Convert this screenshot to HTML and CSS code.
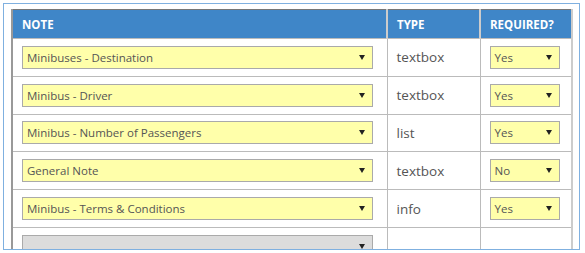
FILE: index.html
```html
<!DOCTYPE html>
<html lang="en">
<head>
    <meta charset="UTF-8">
    <title>Notes</title>
    <link rel="stylesheet" href="styles.css">
</head>
<body>
    <div class="frame">
        <table class="notes">
            <thead>
                <tr>
                    <th class="col-note">Note</th>
                    <th class="col-type">Type</th>
                    <th class="col-req">Required?</th>
                </tr>
            </thead>
            <tbody>
                <tr>
                    <td><div class="pick wide"><span>Minibuses - Destination</span><svg width="6" height="5" viewBox="0 0 6 5"><path d="M0 0h6L3 5z"/></svg></div></td>
                    <td class="type">textbox</td>
                    <td><div class="pick small"><span>Yes</span><svg width="6" height="5" viewBox="0 0 6 5"><path d="M0 0h6L3 5z"/></svg></div></td>
                </tr>
                <tr>
                    <td><div class="pick wide"><span>Minibus - Driver</span><svg width="6" height="5" viewBox="0 0 6 5"><path d="M0 0h6L3 5z"/></svg></div></td>
                    <td class="type">textbox</td>
                    <td><div class="pick small"><span>Yes</span><svg width="6" height="5" viewBox="0 0 6 5"><path d="M0 0h6L3 5z"/></svg></div></td>
                </tr>
                <tr>
                    <td><div class="pick wide"><span>Minibus - Number of Passengers</span><svg width="6" height="5" viewBox="0 0 6 5"><path d="M0 0h6L3 5z"/></svg></div></td>
                    <td class="type">list</td>
                    <td><div class="pick small"><span>Yes</span><svg width="6" height="5" viewBox="0 0 6 5"><path d="M0 0h6L3 5z"/></svg></div></td>
                </tr>
                <tr>
                    <td><div class="pick wide"><span>General Note</span><svg width="6" height="5" viewBox="0 0 6 5"><path d="M0 0h6L3 5z"/></svg></div></td>
                    <td class="type">textbox</td>
                    <td><div class="pick small"><span>No</span><svg width="6" height="5" viewBox="0 0 6 5"><path d="M0 0h6L3 5z"/></svg></div></td>
                </tr>
                <tr>
                    <td><div class="pick wide"><span>Minibus - Terms &amp; Conditions</span><svg width="6" height="5" viewBox="0 0 6 5"><path d="M0 0h6L3 5z"/></svg></div></td>
                    <td class="type">info</td>
                    <td><div class="pick small"><span>Yes</span><svg width="6" height="5" viewBox="0 0 6 5"><path d="M0 0h6L3 5z"/></svg></div></td>
                </tr>
                <tr>
                    <td><div class="pick wide empty"><span></span><svg width="6" height="5" viewBox="0 0 6 5"><path d="M0 0h6L3 5z"/></svg></div></td>
                    <td class="type"></td>
                    <td></td>
                </tr>
            </tbody>
        </table>
    </div>
</body>
</html>
```

FILE: styles.css
```css
body {
    margin: 0;
    background: #fff;
    font-family: "Open Sans", Arial, sans-serif;
    color: #555;
}

.frame {
    margin: 3px 0 0 3px;
    width: 577px;
    height: 247px;
    border: 1px solid #7fb0e0;
    padding: 5px 0 0 7px;
    box-sizing: border-box;
    overflow: hidden;
}

.notes {
    border-collapse: collapse;
    width: 562px;
    table-layout: fixed;
}

.notes th {
    background-color: #3f86c8;
    color: #fff;
    font-size: 11.5px;
    font-weight: bold;
    text-transform: uppercase;
    text-align: left;
    height: 28px;
    padding: 0 0 0 9px;
    border-top: 1px solid #777;
    border-left: 2px solid #999;
    border-right: 2px solid #ccc;
}

.notes th.col-type,
.notes th.col-req {
    border-left: 1px solid #ccc;
}

.col-note { width: 364px; }
.col-type { width: 82px; }
.col-req { width: 81px; }

.notes td {
    height: 36.8px;
    padding: 0 0 0 9px;
    border: 1px solid #bbb;
    vertical-align: middle;
}

.notes td:first-child {
    border-left: 2px solid #999;
}

.notes td:last-child {
    border-right: 2px solid #ccc;
}

.type {
    font-size: 13.5px;
}

.pick {
    display: flex;
    align-items: center;
    justify-content: space-between;
    height: 23px;
    box-sizing: border-box;
    background: #ffffaa;
    border: 1px solid #aaa;
    padding: 0 7px 0 4px;
    font-size: 11.5px;
}

.pick svg {
    fill: #222;
}

.wide { width: 351px; }
.small { width: 70px; }

.empty {
    background: #dcdcdc;
}
```
